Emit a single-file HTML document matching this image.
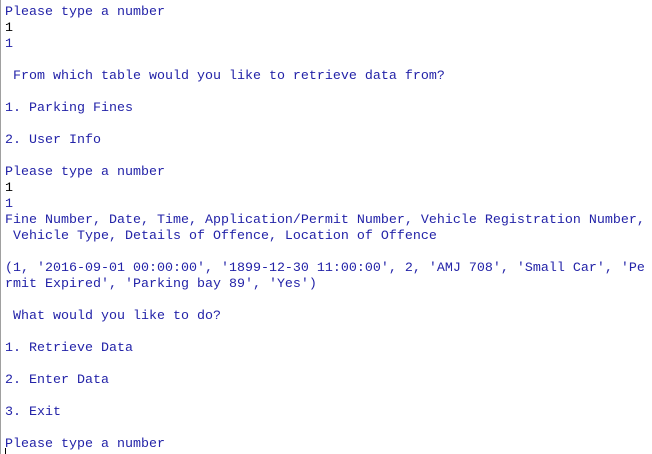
<html><head><style>
body{margin:0;background:#fff;width:652px;height:454px;overflow:hidden;position:relative}
.b{position:absolute;left:0;top:0;width:1px;height:454px;background:#a0a0a0}
pre{position:absolute;left:5px;top:5px;margin:0;font-family:"Liberation Mono",monospace;font-size:13.33px;line-height:16px;color:#2323a8;white-space:pre}
.k{color:#000}
.c{position:absolute;left:5px;top:448px;width:1px;height:6px;background:#000}
</style></head><body><div class="b"></div><pre>Please type a number
<span class="k">1</span>
1

 From which table would you like to retrieve data from?

1. Parking Fines

2. User Info

Please type a number
<span class="k">1</span>
1
Fine Number, Date, Time, Application/Permit Number, Vehicle Registration Number,
 Vehicle Type, Details of Offence, Location of Offence

(1, '2016-09-01 00:00:00', '1899-12-30 11:00:00', 2, 'AMJ 708', 'Small Car', 'Pe
rmit Expired', 'Parking bay 89', 'Yes')

 What would you like to do?

1. Retrieve Data

2. Enter Data

3. Exit

Please type a number</pre><div class="c"></div></body></html>
